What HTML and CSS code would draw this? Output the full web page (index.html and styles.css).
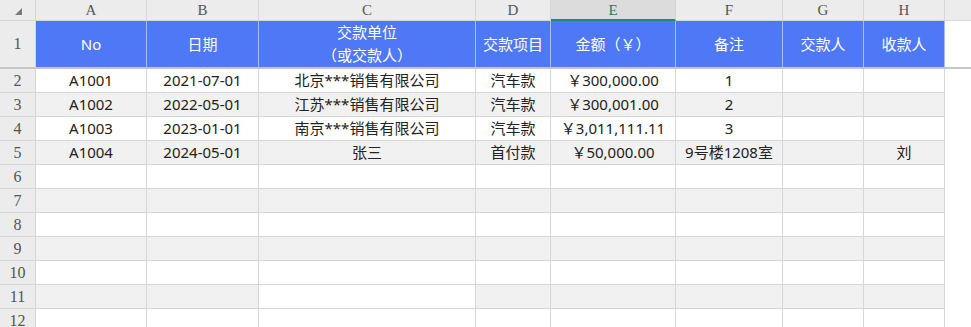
FILE: index.html
```html
<!DOCTYPE html>
<html lang="zh-CN">
<head>
<meta charset="utf-8">
<title>Sheet</title>
<link rel="stylesheet" href="styles.css">
</head>
<body>
<div class="sheet">
  <div class="row colhead">
    <div class="c corner"><span class="tri"></span></div>
    <div class="c">A</div><div class="c">B</div><div class="c">C</div><div class="c">D</div>
    <div class="c sel">E</div><div class="c">F</div><div class="c">G</div><div class="c">H</div>
    <div class="c end"></div>
  </div>
  <div class="row title">
    <div class="c rh">1</div>
    <div class="c">No</div><div class="c">日期</div>
    <div class="c two"><span>交款单位</span><span>（或交款人）</span></div>
    <div class="c">交款项目</div><div class="c">金额（￥）</div><div class="c">备注</div>
    <div class="c">交款人</div><div class="c">收款人</div>
    <div class="c end"></div>
  </div>
  <div class="row">
    <div class="c rh">2</div>
    <div class="c">A1001</div><div class="c">2021-07-01</div><div class="c">北京***销售有限公司</div>
    <div class="c">汽车款</div><div class="c">￥300,000.00</div><div class="c">1</div><div class="c"></div><div class="c"></div><div class="c end"></div>
  </div>
  <div class="row alt">
    <div class="c rh">3</div>
    <div class="c">A1002</div><div class="c">2022-05-01</div><div class="c">江苏***销售有限公司</div>
    <div class="c">汽车款</div><div class="c">￥300,001.00</div><div class="c">2</div><div class="c"></div><div class="c"></div><div class="c end"></div>
  </div>
  <div class="row">
    <div class="c rh">4</div>
    <div class="c">A1003</div><div class="c">2023-01-01</div><div class="c">南京***销售有限公司</div>
    <div class="c">汽车款</div><div class="c">￥3,011,111.11</div><div class="c">3</div><div class="c"></div><div class="c"></div><div class="c end"></div>
  </div>
  <div class="row alt">
    <div class="c rh">5</div>
    <div class="c">A1004</div><div class="c">2024-05-01</div><div class="c">张三</div>
    <div class="c">首付款</div><div class="c">￥50,000.00</div><div class="c">9号楼1208室</div><div class="c"></div><div class="c">刘</div><div class="c end"></div>
  </div>
  <div class="row">
    <div class="c rh">6</div>
    <div class="c"></div><div class="c"></div><div class="c"></div><div class="c"></div><div class="c"></div><div class="c"></div><div class="c"></div><div class="c"></div><div class="c end"></div>
  </div>
  <div class="row alt">
    <div class="c rh">7</div>
    <div class="c"></div><div class="c"></div><div class="c"></div><div class="c"></div><div class="c"></div><div class="c"></div><div class="c"></div><div class="c"></div><div class="c end"></div>
  </div>
  <div class="row">
    <div class="c rh">8</div>
    <div class="c"></div><div class="c"></div><div class="c"></div><div class="c"></div><div class="c"></div><div class="c"></div><div class="c"></div><div class="c"></div><div class="c end"></div>
  </div>
  <div class="row alt">
    <div class="c rh">9</div>
    <div class="c"></div><div class="c"></div><div class="c"></div><div class="c"></div><div class="c"></div><div class="c"></div><div class="c"></div><div class="c"></div><div class="c end"></div>
  </div>
  <div class="row">
    <div class="c rh">10</div>
    <div class="c"></div><div class="c"></div><div class="c"></div><div class="c"></div><div class="c"></div><div class="c"></div><div class="c"></div><div class="c"></div><div class="c end"></div>
  </div>
  <div class="row alt">
    <div class="c rh">11</div>
    <div class="c"></div><div class="c"></div><div class="c plain"></div><div class="c"></div><div class="c"></div><div class="c"></div><div class="c"></div><div class="c"></div><div class="c end"></div>
  </div>
  <div class="row">
    <div class="c rh">12</div>
    <div class="c"></div><div class="c"></div><div class="c"></div><div class="c"></div><div class="c"></div><div class="c"></div><div class="c"></div><div class="c"></div><div class="c end"></div>
  </div>
</div>
</body>
</html>
```
FILE: styles.css
```css
html, body {
  margin: 0;
  padding: 0;
  background: #ffffff;
}
.sheet {
  width: 971px;
  height: 327px;
  overflow: hidden;
  font-family: "Noto Sans", "Noto Sans CJK SC", sans-serif;
  font-size: 15px;
  color: #222;
}
.row {
  display: grid;
  grid-template-columns: 36px 111px 112px 217px 75px 125px 107px 81px 81px 26px;
  height: 24px;
}
.c {
  box-sizing: border-box;
  border-right: 1px solid #d6d6d6;
  border-bottom: 1px solid #d6d6d6;
  display: flex;
  align-items: center;
  justify-content: center;
  white-space: nowrap;
  line-height: 1;
}
.c.end {
  border-right: none;
  border-bottom: none;
  background: #fff;
}
.rh {
  background: #ececec;
  color: #555;
  font-family: "Liberation Serif", "DejaVu Serif", serif;
  font-size: 16px;
  border-bottom-color: #d6d6d6;
}
.alt .c {
  background: #f1f1f1;
}
.alt .c.rh {
  background: #ececec;
}
.alt .c.plain,
.alt .c.end {
  background: #fff;
}

/* column header */
.colhead {
  height: 21px;
}
.colhead .c {
  background: #ececec;
  color: #555;
  font-family: "Liberation Serif", "DejaVu Serif", serif;
  font-size: 15px;
  border-bottom: 1px solid #d6d6d6;
  padding-top: 1px;
}
.colhead .c.end {
  background: #ececec;
  border-bottom: 1px solid #d6d6d6;
}
.colhead .c.sel {
  background: #dcdcdc;
  color: #1e7d5e;
  border-bottom: 2px solid #23887a;
}
.corner {
  position: relative;
}
.tri {
  position: absolute;
  left: 15px;
  top: 8px;
  width: 0;
  height: 0;
  border-left: 7px solid transparent;
  border-bottom: 7px solid #7a7a7a;
}

/* title row */
.title {
  height: 48px;
}
.title .c {
  background: #4f78f6;
  color: #fff;
  border-right: 1px solid #a9bdf7;
  border-bottom: 2px solid #c6c6c6;
}
.title .c.rh {
  background: #ececec;
  color: #555;
  border-right: 1px solid #d6d6d6;
}
.title .c.end {
  background: #fff;
  border-right: none;
  border-bottom: 2px solid #c6c6c6;
}
.title .c.two {
  flex-direction: column;
  gap: 8px;
}
```
